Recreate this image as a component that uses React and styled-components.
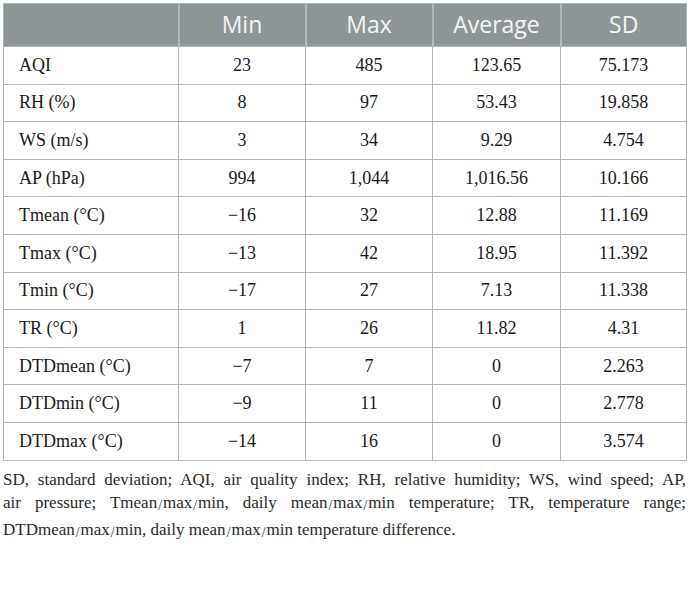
import styled, { createGlobalStyle } from "styled-components";

const GlobalStyle = createGlobalStyle`
    body {
        margin: 0;
        background: #ffffff;
    }
`;

const rows = [
    ["AQI", "23", "485", "123.65", "75.173"],
    ["RH (%)", "8", "97", "53.43", "19.858"],
    ["WS (m/s)", "3", "34", "9.29", "4.754"],
    ["AP (hPa)", "994", "1,044", "1,016.56", "10.166"],
    ["Tmean (°C)", "\u221216", "32", "12.88", "11.169"],
    ["Tmax (°C)", "\u221213", "42", "18.95", "11.392"],
    ["Tmin (°C)", "\u221217", "27", "7.13", "11.338"],
    ["TR (°C)", "1", "26", "11.82", "4.31"],
    ["DTDmean (°C)", "\u22127", "7", "0", "2.263"],
    ["DTDmin (°C)", "\u22129", "11", "0", "2.778"],
    ["DTDmax (°C)", "\u221214", "16", "0", "3.574"],
];

const widths = [175, 127, 127, 128, 126];

export default function App() {
    return (
        <Page>
            <GlobalStyle />
            <Table>
                <colgroup>
                    {widths.map((w, i) => (
                        <col key={i} style={{ width: w }} />
                    ))}
                </colgroup>
                <thead>
                    <tr>
                        <Head></Head>
                        <Head>Min</Head>
                        <Head>Max</Head>
                        <Head>Average</Head>
                        <Head>SD</Head>
                    </tr>
                </thead>
                <tbody>
                    {rows.map((r) => (
                        <Row key={r[0]}>
                            {r.map((c, i) => (
                                <Cell key={i} $label={i === 0}>
                                    {c}
                                </Cell>
                            ))}
                        </Row>
                    ))}
                </tbody>
            </Table>
            <Note>
                <Line $full>
                    SD, standard deviation; AQI, air quality index; RH, relative humidity; WS, wind speed; AP,
                </Line>
                <Line $full>
                    air pressure; Tmean<Slash>/</Slash>max<Slash>/</Slash>min, daily mean<Slash>/</Slash>max
                    <Slash>/</Slash>min temperature; TR, temperature range;
                </Line>
                <Line>
                    DTDmean<Slash>/</Slash>max<Slash>/</Slash>min, daily mean<Slash>/</Slash>max<Slash>/</Slash>min
                    temperature difference.
                </Line>
            </Note>
        </Page>
    );
}

const Page = styled.div`
    padding: 3px 3px 0 3px;
    width: 683px;
    display: flex;
    flex-direction: column;
    gap: 7px;
`;

const Table = styled.table`
    width: 683px;
    border-collapse: collapse;
    table-layout: fixed;
    border: 1px solid #a7b8b0;
`;

const Head = styled.th`
    height: 40px;
    padding: 0 0 2px 0;
    background: #8f9698;
    color: #f4f4f4;
    font-family: "Open Sans", sans-serif;
    font-size: 23px;
    font-weight: 400;
    text-align: center;
    border-left: 2px solid #b3b7b8;
    border-top: 1px solid #a7c0b4;
    &:first-child {
        border-left: none;
    }
`;

const Row = styled.tr`
    height: 37.6px;
`;

const Cell = styled.td`
    padding: 0 ${(p) => (p.$label ? "0 0 15px" : "0")};
    border: 1px solid #b4b6b6;
    font-family: "Liberation Serif", "Times New Roman", serif;
    font-size: 18px;
    color: #1a1a1a;
    text-align: ${(p) => (p.$label ? "left" : "center")};
    white-space: nowrap;
`;

const Note = styled.div`
    display: flex;
    flex-direction: column;
    font-family: "Liberation Serif", "Times New Roman", serif;
    font-size: 17px;
    line-height: 23.5px;
    color: #2a2a2a;
`;

const Line = styled.div`
    white-space: nowrap;
    text-align: ${(p) => (p.$full ? "justify" : "left")};
    text-align-last: ${(p) => (p.$full ? "justify" : "left")};
`;

const Slash = styled.span`
    font-size: 0.8em;
    vertical-align: -2px;
    margin: 0 1px;
`;
